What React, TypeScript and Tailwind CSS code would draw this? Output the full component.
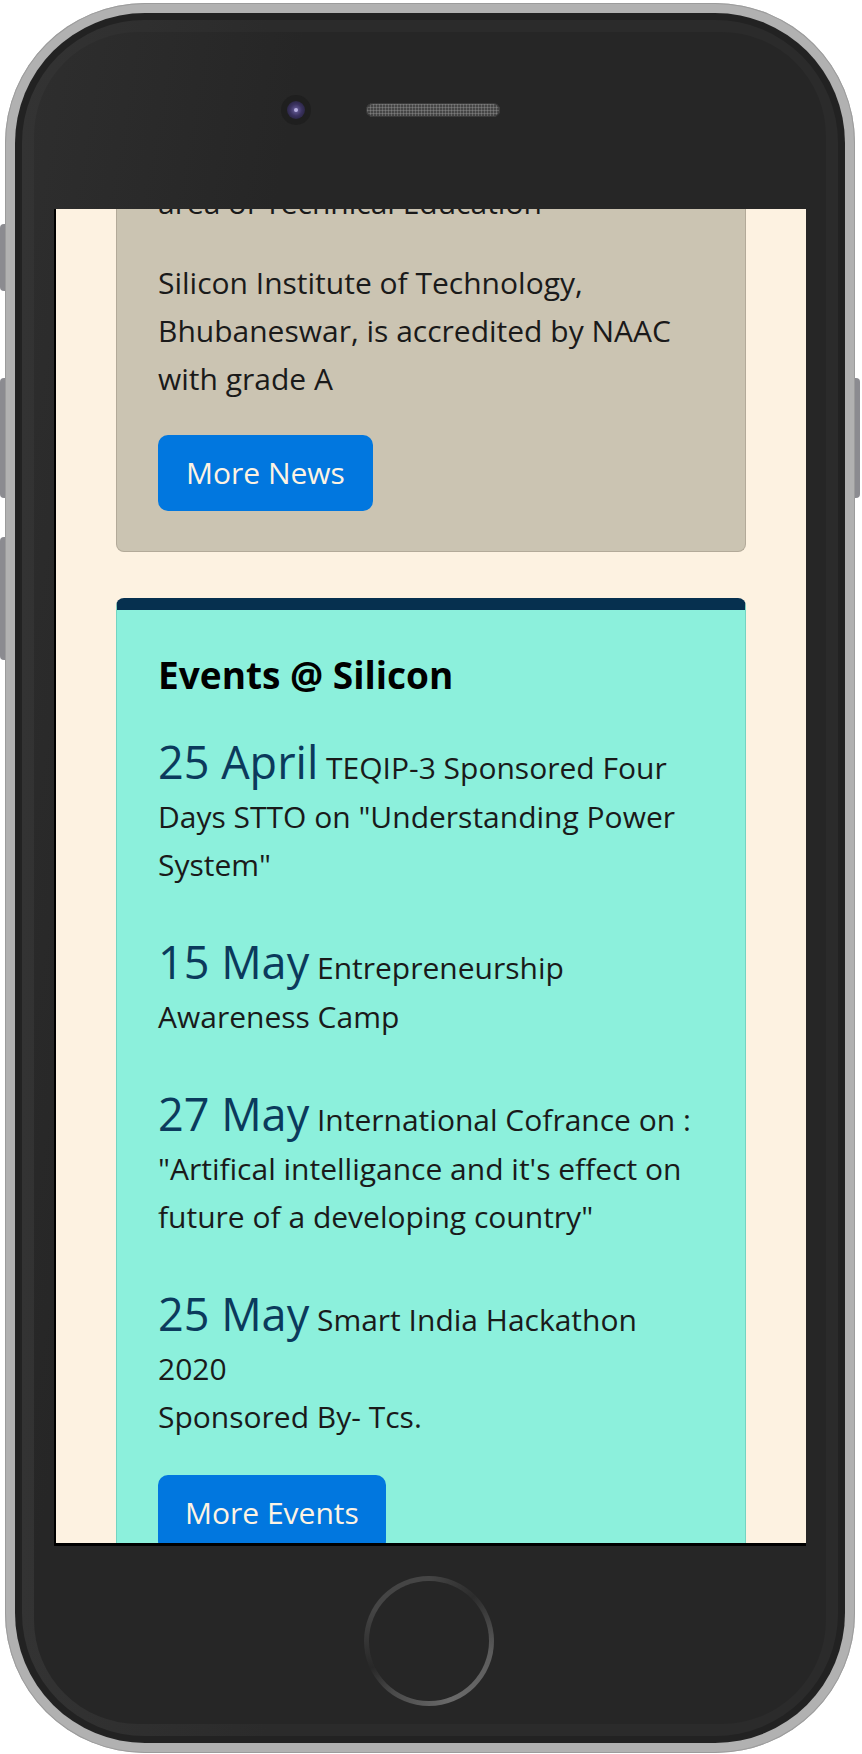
export default function App() {
  const events = [
    { date: "25 April", lines: ["TEQIP-3 Sponsored Four", 'Days STTO on "Understanding Power', 'System"'] },
    { date: "15 May", lines: ["Entrepreneurship", "Awareness Camp"] },
    {
      date: "27 May",
      lines: ["International Cofrance on :", '"Artifical intelligance and it\'s effect on', 'future of a developing country"'],
    },
    { date: "25 May", lines: ["Smart India Hackathon", "2020", "Sponsored By- Tcs."] },
  ];

  return (
    <div className="relative w-[862px] h-[1754px] bg-white overflow-hidden">
      {/* side buttons */}
      <div className="absolute left-0 top-[224px] w-[8px] h-[67px] rounded-l-[4px] bg-[#8b8b90]" />
      <div className="absolute left-0 top-[378px] w-[8px] h-[120px] rounded-l-[4px] bg-[#8b8b90]" />
      <div className="absolute left-0 top-[537px] w-[8px] h-[123px] rounded-l-[4px] bg-[#8b8b90]" />
      <div className="absolute left-[850px] top-[378px] w-[10px] h-[120px] rounded-r-[4px] bg-[#8b8b90]" />

      {/* phone body */}
      <div className="relative ml-[5px] mt-[3px] w-[850px] h-[1750px] rounded-[140px] bg-[#b1b1b1] p-[10px] shadow-[inset_0_0_0_1px_#9c9c9c]">
        <div className="w-full h-full rounded-[130px] bg-[#222222] p-[7px]">
          <div className="w-full h-full rounded-[123px] bg-[linear-gradient(90deg,#333333,#2b2b2b_30%,#2b2b2b)] p-[12px]">
            <div className="flex flex-col w-full h-full rounded-[104px] bg-[linear-gradient(100deg,#2e2e2e,#262626_25%,#262626)]">
              {/* top bezel */}
              <div className="h-[177px] pt-[63px]">
                <div className="flex items-center h-[30px] pl-[247px]">
                  <div className="flex items-center justify-center w-[30px] h-[30px] rounded-full bg-[#1f1f1f]">
                    <div className="flex items-center justify-center w-[18px] h-[18px] rounded-full bg-[radial-gradient(circle,#6d63a0_0%,#3b3360_45%,#1c1a2c_100%)]">
                      <div className="w-[4px] h-[4px] rounded-full bg-[#b8b0e0]" />
                    </div>
                  </div>
                  <div className="ml-[55px] w-[134px] h-[14px] rounded-full bg-[#454545] bg-[radial-gradient(circle,#7a7a7a_0.8px,transparent_1.3px)] bg-[length:3px_3px] shadow-[inset_0_0_0_1px_#3a3a3a]" />
                </div>
              </div>

              {/* screen */}
              <div className="ml-[20px] w-[752px] h-[1337px] overflow-hidden border-l-2 border-b-[3px] border-black bg-[#fdf2e1]">
                <div className="-mt-[30px] px-[60px] font-['Open_Sans',sans-serif] text-[30px] leading-[48px] text-[#1a1a1a]">
                  <div className="bg-[#cbc4b2] border border-t-0 border-[#b3aa99] rounded-b-[8px] px-[41px] pb-[40px]">
                    <p className="mb-[32px] whitespace-nowrap">area of Technical Education</p>
                    <p className="mb-[32px] whitespace-nowrap">
                      Silicon Institute of Technology,
                      <br />
                      Bhubaneswar, is accredited by NAAC
                      <br />
                      with grade A
                    </p>
                    <button className="block px-[28px] py-[14px] rounded-[10px] bg-[#0177df] text-[#fdf3e3] text-[30px] leading-[48px]">
                      More News
                    </button>
                  </div>

                  <div className="mt-[46px] bg-[#8cf0dc] border border-[#74d4c2] border-t-[12px] border-t-[#06304f] rounded-[8px] px-[41px] pt-[41px] pb-[40px]">
                    <h5 className="mb-[24px] text-[37px] leading-[48px] font-bold text-black">Events @ Silicon</h5>
                    {events.map((ev) => (
                      <p key={ev.date + ev.lines[0]} className="mb-[34px] whitespace-nowrap">
                        <span className="inline-block pt-[8px] text-[45px] leading-[62px] text-[#0b3a5c]">{ev.date}</span>{" "}
                        {ev.lines.map((l, i) => (
                          <span key={i}>
                            {i > 0 && <br />}
                            {l}
                          </span>
                        ))}
                      </p>
                    ))}
                    <button className="block px-[27px] py-[14px] rounded-[10px] bg-[#0177df] text-[#fdf3e3] text-[30px] leading-[48px]">
                      More Events
                    </button>
                  </div>
                </div>
              </div>

              {/* home button */}
              <div className="flex justify-center pt-[30px] pr-[2px]">
                <div className="flex items-center justify-center w-[130px] h-[130px] rounded-full bg-[conic-gradient(#454545_0deg,#2c2c2c_45deg,#5c5c5c_100deg,#6a6a6a_160deg,#4a4a4a_215deg,#282828_245deg,#454545_300deg,#454545_360deg)]">
                  <div className="w-[120px] h-[120px] rounded-full bg-[#262626]" />
                </div>
              </div>
            </div>
          </div>
        </div>
      </div>
    </div>
  );
}
